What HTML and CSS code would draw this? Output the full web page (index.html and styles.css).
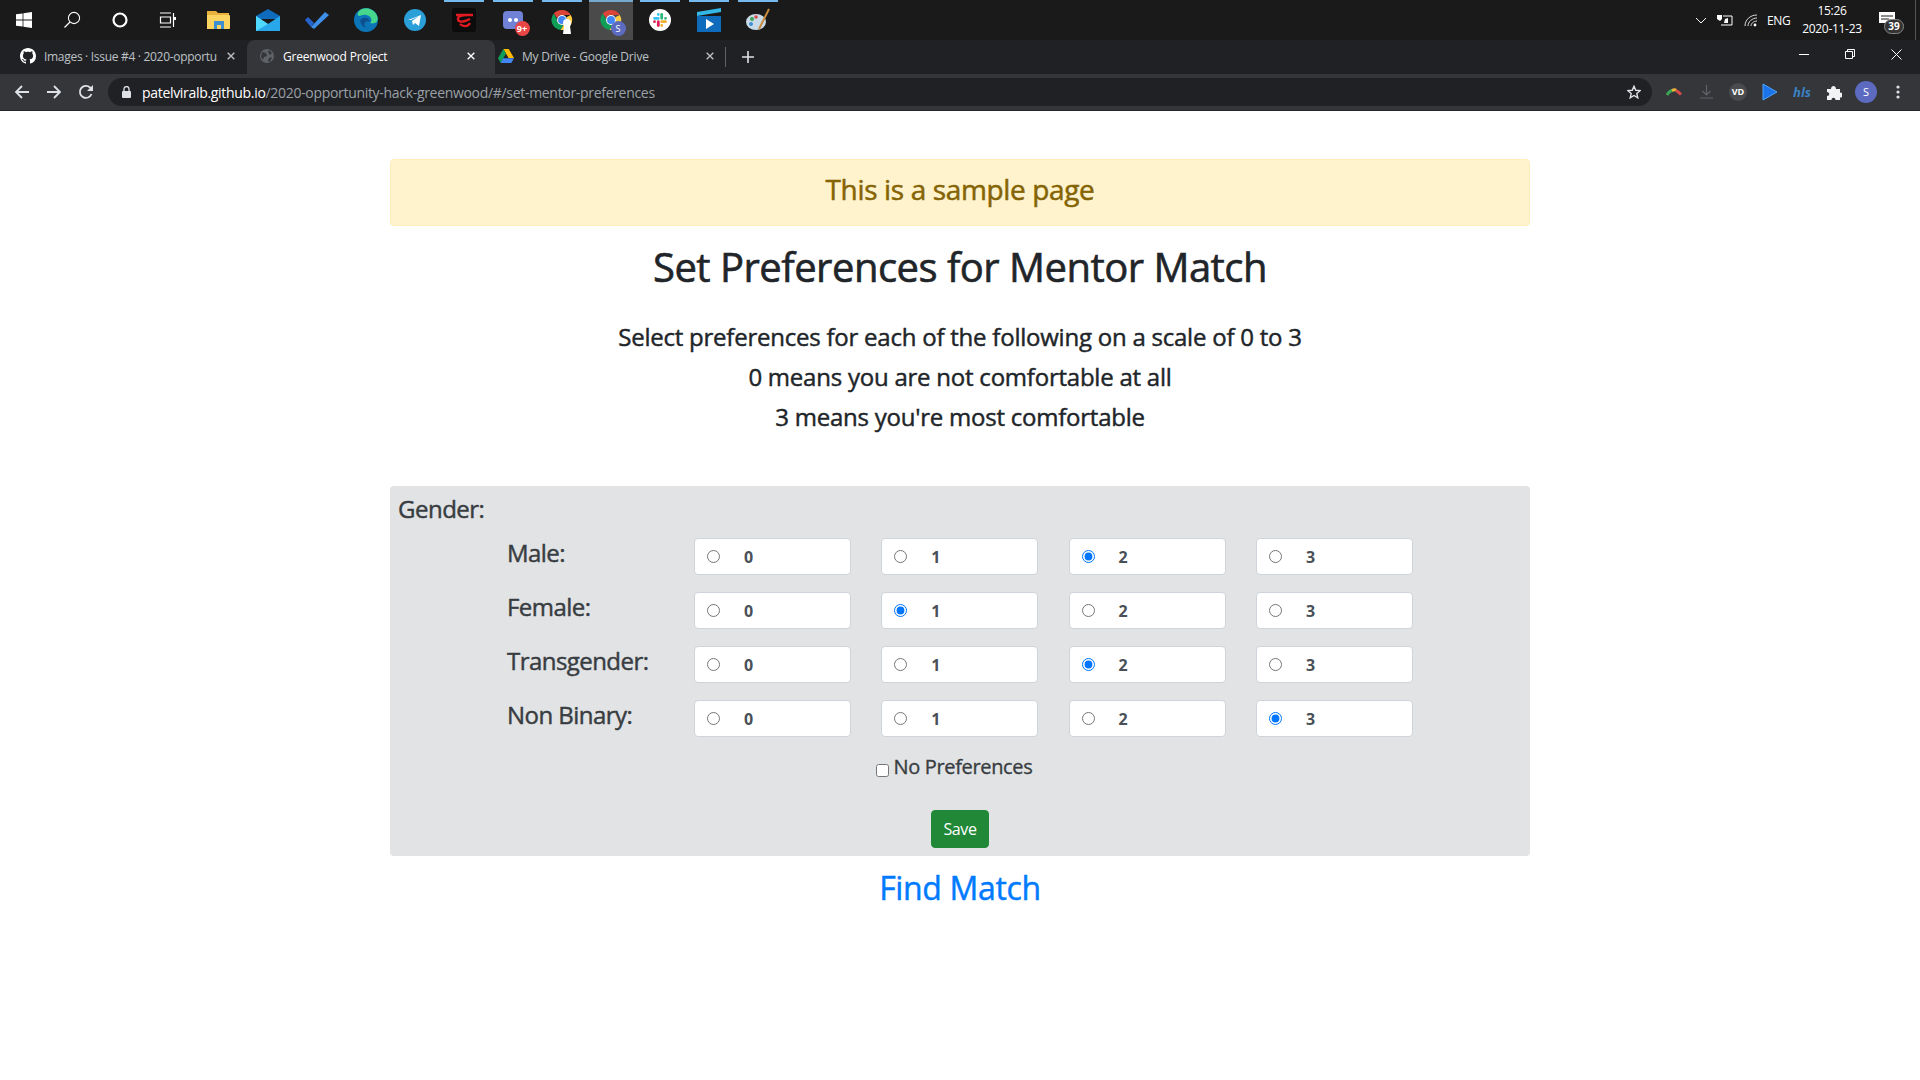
FILE: index.html
```html
<!DOCTYPE html>
<html lang="en">
<head>
<meta charset="utf-8">
<title>Greenwood Project</title>
<link rel="stylesheet" href="styles.css">
</head>
<body>
<svg class="defs" width="0" height="0" aria-hidden="true">
  <symbol id="chrome" viewBox="0 0 24 24">
    <path fill="#db4437" d="M12 1a11 11 0 0 1 9.53 5.5H12a5.5 5.5 0 0 0-5.2 3.7L3 5A11 11 0 0 1 12 1z"/>
    <path fill="#0f9d58" d="M3 5l4 7a5.5 5.5 0 0 0 6.6 5.3L10.5 22.9A11 11 0 0 1 3 5z"/>
    <path fill="#ffcd40" d="M21.53 6.5A11 11 0 0 1 10.5 22.9l3.9-6.9A5.5 5.5 0 0 0 16.8 9z"/>
    <circle cx="12" cy="12" r="5.4" fill="#fff"/>
    <circle cx="12" cy="12" r="4.3" fill="#4285f4"/>
  </symbol>
  <symbol id="close" viewBox="0 0 12 12">
    <path d="M2 2l8 8M10 2l-8 8" fill="none" stroke="currentColor" stroke-width="1.6"/>
  </symbol>
</svg>

<header class="taskbar">
  <div class="tb tb-s"><svg width="16" height="16" viewBox="0 0 16 16"><path fill="#fff" d="M0 2.3l6.6-.9v6.2H0zM7.4 1.3L16 0v7.6H7.4zM0 8.4h6.6v6.2L0 13.7zM7.4 8.4H16V16l-8.600-1.300z"/></svg></div>
  <div class="tb tb-s"><svg width="18" height="18" viewBox="0 0 18 18"><circle cx="11" cy="7" r="5.6" fill="none" stroke="#fff" stroke-width="1.1"/><path d="M7 11L1.5 16.5" stroke="#fff" stroke-width="1.2"/></svg></div>
  <div class="tb tb-s"><svg width="16" height="16" viewBox="0 0 16 16"><circle cx="8" cy="8" r="6.5" fill="none" stroke="#fff" stroke-width="2.2"/></svg></div>
  <div class="tb tb-s tb-gap"><svg width="18" height="16" viewBox="0 0 18 16"><path fill="none" stroke="#fff" stroke-width="1.2" d="M1 1h11M1 15h11M1.5 5h10v6h-10zM14.5 1v14"/><path fill="#fff" d="M14 5h3v3h-3z"/></svg></div>

  <div class="tb"><svg width="24" height="20" viewBox="0 0 24 20"><path fill="#e8b33c" d="M0 1h9l2 2h11v3H0z"/><path fill="#fcd462" d="M0 5h22a1 1 0 0 1 1 1v12a1 1 0 0 1-1 1H0z"/><path fill="#3f8fd0" d="M7 11h10v8h-3v-4h-4v4H7z"/></svg></div>
  <div class="tb"><svg width="24" height="22" viewBox="0 0 24 22"><path fill="#0f6cbd" d="M12 0l12 7v3H0V7z"/><path fill="#28a8ea" d="M0 7l12 8 12-8v15H0z"/><path fill="#50d9ff" d="M0 7l12 8L0 22z"/></svg></div>
  <div class="tb"><svg width="24" height="18" viewBox="0 0 24 18"><path fill="#2564cf" d="M0 9l3-3 6 6-3 4z"/><path fill="#3e8fe8" d="M6 16L20 1l4 3L9 18z"/></svg></div>
  <div class="tb"><svg width="24" height="24" viewBox="0 0 24 24"><circle cx="12" cy="12" r="12" fill="#0c75b8"/><path fill="#46d68c" d="M8 1a12 12 0 0 1 15.500 8c1 5-3 7.500-7.500 6 2-2 2-5-1-7-3-1.800-6-1.500-8-.5C2 9.500 3 3 8 1z"/><path fill="#0d4f8f" d="M6 13c1-4 9-5 10 1-3-2-7 0-5 5 1 2 4 3 7 3a12 12 0 0 1-12-9z"/></svg></div>
  <div class="tb"><svg width="22" height="22" viewBox="0 0 22 22"><circle cx="11" cy="11" r="11" fill="#2a9fd8"/><path fill="#fff" d="M4 11l13-5-2 11-4-3-2 2-1-4 7-5-8 4z"/></svg></div>
  <div class="tb"><span class="garena"><svg width="20" height="18" viewBox="0 0 20 18"><path fill="none" stroke="#e11a22" stroke-width="2.4" d="M2 4h17M13 4c-5 0-9 1-9 4 0 3 4 3 7 2l5-2M6 13c3 3 8 3 10-1"/></svg></span></div>
  <div class="tb"><span class="iconbox"><svg width="20" height="18" viewBox="0 0 20 18"><rect width="20" height="18" rx="4" fill="#6f82d6"/><circle cx="7" cy="9" r="2" fill="#fff"/><circle cx="13" cy="9" r="2" fill="#fff"/></svg><span class="badge-red">9+</span></span></div>
  <div class="tb"><span class="iconbox"><svg width="22" height="22"><use href="#chrome"/></svg><svg class="ghost" width="10" height="16" viewBox="0 0 10 16"><circle cx="5" cy="5" r="4" fill="#fff"/><path fill="#fff" d="M2 8h6l1 8H1z"/></svg></span></div>
  <div class="tb tb-active"><span class="iconbox"><svg width="22" height="22"><use href="#chrome"/></svg><span class="badge-s">S</span></span></div>
  <div class="tb"><svg width="22" height="22" viewBox="0 0 22 22"><circle cx="11" cy="11" r="11" fill="#fff"/><g stroke-width="2.8" stroke-linecap="round"><path stroke="#36c5f0" d="M5.500 9.300h3.800M9.300 5.500v0"/><path stroke="#2eb67d" d="M12.700 5.500v3.800M16.500 9.300v0"/><path stroke="#ecb22e" d="M16.500 12.700h-3.800M12.700 16.500v0"/><path stroke="#e01e5a" d="M9.300 16.500v-3.800M5.500 12.700v0"/></g></svg></div>
  <div class="tb"><svg width="24" height="24" viewBox="0 0 24 24"><path fill="#35b8e8" d="M0 4l24-4v4L0 8z"/><path fill="#0f6cbd" d="M0 8h24v16H0z"/><path fill="#fff" d="M9 11l8 5-8 5z"/></svg></div>
  <div class="tb"><svg width="24" height="24" viewBox="0 0 24 24"><ellipse cx="10" cy="14" rx="10" ry="8" fill="#c9dbe8"/><circle cx="6" cy="11" r="2" fill="#3aa655"/><circle cx="10" cy="9" r="1.800" fill="#d94a4a"/><circle cx="5" cy="16" r="2" fill="#3f8fd0"/><path stroke="#c98a3c" stroke-width="2" d="M23 1L13 21"/></svg></div>

  <div class="tray">
    <svg class="tray-chevron" width="12" height="7" viewBox="0 0 12 7"><path d="M1 1l5 5 5-5" fill="none" stroke="#fff"/></svg>
    <svg class="tray-power" width="16" height="12" viewBox="0 0 16 12"><path fill="none" stroke="#fff" d="M6 2h9v9H4"/><path fill="#fff" d="M0 1h5v4l-2 2-3-2zM8 5l3-1v5H7z"/></svg>
    <svg class="tray-wifi" width="14" height="13" viewBox="0 0 14 13"><path fill="none" stroke="#ddd" d="M1 12C1 6 6 1 13 1M4 12c0-4 4-8 9-8M7 12c0-2 2-5 6-5"/><circle cx="11" cy="11" r="1.400" fill="#fff"/></svg>
    <span class="tray-lang">ENG</span>
    <div class="clock"><span>15:26</span><span>2020-11-23</span></div>
    <div class="notify"><svg width="16" height="13" viewBox="0 0 16 13"><path fill="#fff" d="M0 0h16v11H0z"/><path stroke="#1a1a1a" d="M2 4h12M2 7h8"/></svg><span class="notify-count">39</span></div>
    <span class="show-desktop"></span>
  </div>
</header>

<nav class="tabbar">
  <div class="tab">
    <svg class="fav" width="16" height="16" viewBox="0 0 16 16"><path fill="#fff" d="M8 0C3.58 0 0 3.58 0 8c0 3.54 2.29 6.53 5.47 7.59.4.07.55-.17.55-.38 0-.19-.01-.82-.01-1.49-2.01.37-2.53-.49-2.69-.94-.09-.23-.48-.94-.82-1.13-.28-.15-.68-.52-.01-.53.63-.01 1.08.58 1.23.82.72 1.21 1.87.87 2.33.66.07-.52.28-.87.51-1.07-1.78-.2-3.64-.89-3.64-3.95 0-.87.31-1.59.82-2.15-.08-.2-.36-1.02.08-2.12 0 0 .67-.21 2.2.82.64-.18 1.32-.27 2-.27.68 0 1.36.09 2 .27 1.53-1.04 2.2-.82 2.2-.82.44 1.1.16 1.92.08 2.12.51.56.82 1.27.82 2.15 0 3.07-1.87 3.75-3.65 3.95.29.25.54.73.54 1.48 0 1.07-.01 1.93-.01 2.2 0 .21.15.46.55.38A8.013 8.013 0 0016 8c0-4.42-3.58-8-8-8z"/></svg>
    <span class="tab-title tab-title-long">Images · Issue #4 · 2020-opportu</span>
    <svg class="tab-x" width="10" height="10"><use href="#close"/></svg>
  </div>
  <div class="tab tab-on">
    <svg class="fav" width="16" height="16" viewBox="0 0 16 16"><circle cx="8" cy="8" r="7" fill="#5f6368"/><path fill="#35363a" d="M3 4l4 1 1 3-3 1-1 3-2-3zM10 2l3 3-2 2-2-3zM10 10l3-1-2 5-2-1z"/></svg>
    <span class="tab-title">Greenwood Project</span>
    <svg class="tab-x" width="10" height="10"><use href="#close"/></svg>
  </div>
  <div class="tab tab-last">
    <svg class="fav" width="16" height="14" viewBox="0 0 16 14"><path fill="#ffba00" d="M5.300 0h5.400l5.300 9h-5.400z"/><path fill="#0f9d58" d="M5.300 0L8 4.500 2.700 14 0 9.300z"/><path fill="#4285f4" d="M5 9.300h11L13.300 14H2.700z"/></svg>
    <span class="tab-title">My Drive - Google Drive</span>
    <svg class="tab-x" width="10" height="10"><use href="#close"/></svg>
  </div>
  <span class="tab-sep"></span>
  <svg class="tab-plus" width="12" height="12" viewBox="0 0 12 12"><path d="M6 0v12M0 6h12" stroke="#dee1e6" stroke-width="1.600"/></svg>
  <div class="winctl">
    <svg width="10" height="10" viewBox="0 0 10 10"><path d="M0 5.500h10" stroke="#fff"/></svg>
    <svg width="10" height="10" viewBox="0 0 10 10"><path fill="none" stroke="#fff" d="M.5 2.500h7v7h-7zM2.500 2.500v-2h7v7h-2"/></svg>
    <svg width="11" height="11" viewBox="0 0 11 11"><path d="M.5.500l10 10M10.500.500l-10 10" stroke="#fff"/></svg>
  </div>
</nav>

<div class="toolbar">
  <svg class="nav-ic" width="16" height="16" viewBox="0 0 16 16"><path d="M15 8H2M8 2L2 8l6 6" fill="none" stroke="#dee1e6" stroke-width="1.800"/></svg>
  <svg class="nav-ic" width="16" height="16" viewBox="0 0 16 16"><path d="M1 8h13M8 2l6 6-6 6" fill="none" stroke="#dee1e6" stroke-width="1.800"/></svg>
  <svg class="nav-ic" width="16" height="16" viewBox="0 0 16 16"><path d="M13.500 10A6 6 0 1 1 12 3.500L14 5.500" fill="none" stroke="#dee1e6" stroke-width="1.800"/><path fill="#dee1e6" d="M15 1v6H9z"/></svg>
  <div class="omnibox">
    <svg class="lock" width="9" height="12" viewBox="0 0 9 12"><path fill="none" stroke="#dee1e6" stroke-width="1.300" d="M2 5V3a2.500 2.500 0 0 1 5 0v2"/><rect y="5" width="9" height="7" rx="1" fill="#dee1e6"/></svg>
    <span class="url"><span class="url-host">patelviralb.github.io</span>/2020-opportunity-hack-greenwood/#/set-mentor-preferences</span>
    <svg class="star" width="14" height="14" viewBox="0 0 24 24"><path fill="none" stroke="#dee1e6" stroke-width="2.400" d="M12 2l3 7 7.500.7-5.700 5 1.700 7.300L12 18l-6.500 4 1.700-7.300-5.700-5L9 9z"/></svg>
  </div>
  <div class="exts">
    <span class="ext"><svg width="16" height="8" viewBox="0 0 16 8"><path d="M1 7C3 3 5 2.500 7 2.500" stroke="#3aa655" stroke-width="3" fill="none"/><path d="M6 2.500c2-1 3-1 4 0" stroke="#e8b33c" stroke-width="3" fill="none"/><path d="M10 2.500c2 1 3 2 5 4" stroke="#d94a4a" stroke-width="3" fill="none"/></svg></span>
    <span class="ext"><svg width="13" height="14" viewBox="0 0 13 14"><path d="M6.500 0v10M2.500 6l4 4 4-4M0 13h13" fill="none" stroke="#5f6368" stroke-width="1.200"/></svg></span>
    <span class="ext"><span class="ext-vd">VD</span></span>
    <span class="ext"><svg width="16" height="18" viewBox="0 0 16 18"><path fill="#1a73e8" stroke="#4fa3f7" d="M1 1l14 8-14 8z"/></svg></span>
    <span class="ext"><span class="ext-hls">hls</span></span>
    <span class="ext"><svg width="15" height="15" viewBox="0 0 15 15"><path fill="#f1f3f4" d="M0 4h4c0-4 5-4 5 0h4v3.500c4 0 4 5 0 5V15H8.500c0-3-4-3-4 0H0v-4c3 0 3-4 0-4z"/></svg></span>
    <span class="ext"><span class="avatar">S</span></span>
    <span class="ext"><svg width="4" height="14" viewBox="0 0 4 14"><g fill="#dee1e6"><circle cx="2" cy="2" r="1.600"/><circle cx="2" cy="7" r="1.600"/><circle cx="2" cy="12" r="1.600"/></g></svg></span>
  </div>
</div>

<main class="page">
  <h3 class="alert">This is a sample page</h3>
  <h1 class="title">Set Preferences for Mentor Match</h1>
  <div class="intro">
    <p>Select preferences for each of the following on a scale of 0 to 3</p>
    <p>0 means you are not comfortable at all</p>
    <p>3 means you're most comfortable</p>
  </div>

  <form class="panel">
    <h4 class="panel-head">Gender:</h4>
    <div class="pref-row">
      <span class="pref-label">Male:</span>
      <label class="choice"><input type="radio" name="male"><b>0</b></label>
      <label class="choice"><input type="radio" name="male"><b>1</b></label>
      <label class="choice"><input type="radio" name="male" checked><b>2</b></label>
      <label class="choice"><input type="radio" name="male"><b>3</b></label>
    </div>
    <div class="pref-row">
      <span class="pref-label">Female:</span>
      <label class="choice"><input type="radio" name="female"><b>0</b></label>
      <label class="choice"><input type="radio" name="female" checked><b>1</b></label>
      <label class="choice"><input type="radio" name="female"><b>2</b></label>
      <label class="choice"><input type="radio" name="female"><b>3</b></label>
    </div>
    <div class="pref-row">
      <span class="pref-label">Transgender:</span>
      <label class="choice"><input type="radio" name="trans"><b>0</b></label>
      <label class="choice"><input type="radio" name="trans"><b>1</b></label>
      <label class="choice"><input type="radio" name="trans" checked><b>2</b></label>
      <label class="choice"><input type="radio" name="trans"><b>3</b></label>
    </div>
    <div class="pref-row">
      <span class="pref-label">Non Binary:</span>
      <label class="choice"><input type="radio" name="nb"><b>0</b></label>
      <label class="choice"><input type="radio" name="nb"><b>1</b></label>
      <label class="choice"><input type="radio" name="nb"><b>2</b></label>
      <label class="choice"><input type="radio" name="nb" checked><b>3</b></label>
    </div>
    <label class="no-pref"><input type="checkbox"><span>No Preferences</span></label>
    <button class="save" type="button">Save</button>
  </form>
  <a class="find" href="#">Find Match</a>
</main>
</body>
</html>
```
FILE: styles.css
```css
* { box-sizing: border-box; }
html, body { margin: 0; padding: 0; background: #fff; }
body { font-family: "Open Sans", "Noto Sans", sans-serif; color: #212529; height: 1080px; overflow: hidden; }
.defs { position: absolute; }

/* taskbar */
.taskbar { display: flex; height: 40px; background: #1a1a1b; align-items: stretch; color: #fff; }
.tb { width: 49px; display: flex; align-items: center; justify-content: center; position: relative; }
.tb-s { width: 48px; }
.tb-gap { margin-right: 2px; }
.tb:nth-child(n+10):not(.tb-active)::before { content: ""; position: absolute; top: 0; left: 4.5px; width: 40px; height: 2px; background: #76b9ed; }
.tb-active { background: #4a4a4b; width: 44px; margin: 0 2.5px; }
.tb-active::before { content: ""; position: absolute; top: 0; left: 0; right: 0; height: 2px; background: #76a9d0; }
.garena { width: 24px; height: 24px; background: #0c0c0c; border-radius: 3px; display: flex; align-items: center; justify-content: center; }
.iconbox { position: relative; display: flex; }
.badge-red { position: absolute; right: -7px; bottom: -7px; width: 15px; height: 15px; border-radius: 50%; background: #e84545; color: #fff; font-size: 9px; font-weight: 700; line-height: 15px; text-align: center; }
.badge-s { position: absolute; right: -4px; bottom: -5px; width: 15px; height: 15px; border-radius: 50%; background: #5c6bc0; color: #fff; font-size: 9px; line-height: 15px; text-align: center; }
.ghost { position: absolute; right: 1px; bottom: -3px; }

.tray { margin-left: auto; display: flex; align-items: center; height: 40px; color: #fff; }
.tray-chevron { margin-right: 10px; }
.tray-power { margin-right: 11px; }
.tray-wifi { margin-right: 9px; }
.tray-lang { font-size: 12px; letter-spacing: -.4px; width: 24px; margin-right: 9px; white-space: nowrap; }
.clock { display: flex; flex-direction: column; align-items: center; width: 64px; font-size: 12px; line-height: 18px; letter-spacing: -.3px; margin-right: 15px; }
.notify { position: relative; width: 28px; height: 28px; margin-right: 8px; }
.notify svg { position: absolute; left: 0; top: 6px; }
.notify-count { position: absolute; left: 5px; top: 13px; width: 20px; height: 15px; border: 1px solid #888; border-radius: 8px; background: #333; font-size: 10px; font-weight: 700; line-height: 13px; text-align: center; }
.show-desktop { width: 1px; height: 40px; background: #555; margin-right: 4px; }

/* tabs */
.tabbar { display: flex; align-items: center; height: 34px; background: #202124; }
.tab { width: 247px; height: 34px; padding: 0 11px 2px 20px; display: flex; align-items: center; font-size: 12px; color: #bdc1c6; }
.fav { flex: none; margin-right: 8px; }
.tab-on { background: #35363a; color: #fff; border-radius: 8px 8px 0 0; width: 248px; padding-left: 12px; padding-right: 19px; }
.tab-last { width: 230px; padding-left: 3px; padding-right: 10px; }
.tab-title { flex: 1; white-space: nowrap; overflow: hidden; letter-spacing: -.2px; }
.tab-title-long { letter-spacing: -.3px; }
.tab-x { flex: none; color: #bdc1c6; }
.tab-on .tab-x { color: #fff; }
.tab-sep { width: 1px; height: 20px; background: #5f6368; margin-right: 16px; }
.tab-plus { flex: none; }
.winctl { margin-left: auto; display: flex; align-items: center; gap: 36px; padding-right: 18px; margin-top: -6px; }

/* toolbar */
.toolbar { display: flex; align-items: center; height: 37px; padding: 4px 0 4px 14px; background: #35363a; border-bottom: 1px solid #232427; }
.nav-ic { margin-right: 16px; flex: none; }
.nav-ic:nth-child(3) { margin-right: 14px; }
.omnibox { width: 1544px; height: 28px; border-radius: 14px; background: #202124; display: flex; align-items: center; padding: 0 11px 0 14px; }
.lock { flex: none; margin-right: 11px; }
.url { flex: 1; font-size: 14px; color: #9aa0a6; letter-spacing: -.31px; white-space: nowrap; }
.url-host { color: #fff; }
.star { flex: none; }
.exts { display: flex; margin-left: 6px; }
.ext { width: 32px; height: 28px; display: flex; align-items: center; justify-content: center; }
.ext-vd { width: 18px; height: 18px; border-radius: 50%; background: #4a4b4e; font-size: 9px; font-weight: 700; color: #fff; line-height: 18px; text-align: center; }
.ext-hls { color: #3b82c4; font-size: 13px; font-weight: 700; font-style: italic; }
.avatar { width: 22px; height: 22px; border-radius: 50%; background: #5c6bc0; color: #fff; font-size: 11px; line-height: 22px; text-align: center; }

/* page */
.page { width: 1140px; margin: 0 auto; padding-top: 48px; text-align: center; }
.alert { margin: 0; height: 67px; padding-top: 9px; background: #fff3cd; border: 1px solid #ffeeba; border-radius: 4px; color: #856404; font-size: 28px; font-weight: 500; line-height: 40px; letter-spacing: -.36px; -webkit-text-stroke: .5px; }
.title { margin: 17px 0 19px; font-size: 40px; font-weight: 500; line-height: 48px; letter-spacing: -.52px; -webkit-text-stroke: .6px; }
.intro { margin-top: 26px; font-size: 24px; font-weight: 500; letter-spacing: -.23px; -webkit-text-stroke: .45px; }
.intro p { margin: 0; line-height: 40px; }

.panel { margin-top: 49px; height: 370px; padding: 5px 8px 8px; background: #e2e3e5; border-radius: 4px; color: #383d41; text-align: left; display: flex; flex-direction: column; }
.panel-head { margin: 0 0 11px; font-size: 24px; font-weight: 500; line-height: 36px; letter-spacing: -.5px; -webkit-text-stroke: .45px; }
.pref-row { display: flex; flex: none; align-items: center; height: 37px; margin-bottom: 17px; padding-left: 109px; }
.pref-label { width: 187px; font-size: 24px; font-weight: 500; line-height: 30px; margin-top: -8px; letter-spacing: -.55px; white-space: nowrap; -webkit-text-stroke: .45px; }
.choice { width: 157px; height: 37px; margin-right: 30.300px; background: #fff; border: 1px solid #ced4da; border-radius: 4px; display: flex; align-items: center; padding-left: 12px; }
.choice input { margin: 0; width: 13px; height: 13px; flex: none; }
.choice b { margin-left: 24px; font-size: 16px; font-weight: 700; color: #495057; }
.no-pref { align-self: center; display: flex; align-items: flex-start; height: 30px; margin: -2px 0 0 -12px; font-size: 20px; font-weight: 500; line-height: 30px; letter-spacing: -.35px; -webkit-text-stroke: .35px; }
.no-pref input { margin: 12px 5px 0 0; width: 13px; height: 13px; }
.save { align-self: center; width: 58px; height: 38px; margin-top: 28px; border: 1px solid #218838; border-radius: 4px; background: #218838; color: #fff; font: 400 16px/24px "Open Sans", sans-serif; letter-spacing: -.4px; padding: 0; }
.find { display: block; margin-top: 8px; font-size: 32px; font-weight: 500; line-height: 48px; color: #007bff; text-decoration: none; letter-spacing: -.33px; -webkit-text-stroke: .45px; }
```
